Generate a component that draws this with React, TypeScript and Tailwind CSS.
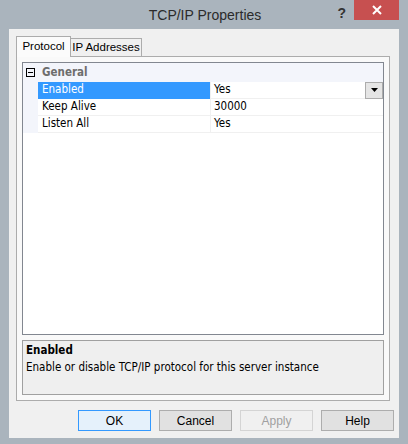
import React from "react";

type Row = { name: string; value: string; selected?: boolean };

const rows: Row[] = [
	{ name: "Enabled", value: "Yes", selected: true },
	{ name: "Keep Alive", value: "30000" },
	{ name: "Listen All", value: "Yes" },
];

const gridFont = { fontFamily: "'DejaVu Sans Condensed', 'DejaVu Sans', sans-serif" };

const DialogButton = ({
	label,
	primary,
	disabled,
}: {
	label: string;
	primary?: boolean;
	disabled?: boolean;
}) => (
	<button
		className={`w-[73px] h-[21px] flex items-center justify-center text-[12px] border ${
			primary
				? "border-[#3399ff] bg-[#e5f1fb] text-black"
				: disabled
				? "border-[#d4d4d4] bg-[#f0f0f0] text-[#a0a0a0]"
				: "border-[#adadad] bg-[#e1e1e1] text-black"
		}`}
	>
		{label}
	</button>
);

const App = () => {
	return (
		<div className="w-[408px] h-[444px] bg-[#aab4bd] flex flex-col font-['Liberation_Sans',sans-serif]">
			{/* ---------- Title bar ---------- */}
			<div className="h-[29px] flex items-center relative">
				<div className="flex-1 text-center text-[14px] text-[#2b2b2b] leading-none pl-[2px] pt-[1px]">
					TCP/IP Properties
				</div>
				<div className="absolute right-[62px] top-[3px] text-[14px] font-bold text-[#333]">?</div>
				<div className="absolute right-[9px] top-0 w-[45px] h-[20px] bg-[#c75050] flex items-center justify-center">
					<svg width="10" height="10" viewBox="0 0 10 10">
						<path d="M1 1 L9 9 M9 1 L1 9" stroke="#fff" strokeWidth="2" />
					</svg>
				</div>
			</div>

			{/* ---------- Client area ---------- */}
			<div className="mx-[9px] h-[409px] bg-[#f0f0f0] flex flex-col px-[7px] pt-[7px]">
				{/* Tabs */}
				<div className="flex items-end h-[20px] text-[11.5px] whitespace-nowrap">
					<div className="h-[21px] w-[55px] border border-b-0 border-[#acacac] bg-[#fbfbfb] flex items-center justify-center relative z-10 -mb-px">
						Protocol
					</div>
					<div className="h-[18px] w-[71px] border border-l-0 border-b-0 border-[#acacac] bg-[#f0f0f0] flex items-center justify-center">
						IP Addresses
					</div>
				</div>

				{/* Tab page */}
				<div className="h-[345px] mr-[2px] border border-[#acacac] bg-[#f9f9f9] px-[5px] pt-[5px] flex flex-col">
					{/* Property grid */}
					<div className="h-[273px] border border-[#828790] bg-white" style={gridFont}>
						<div className="flex h-[19px] bg-[#f3f5fb] items-center">
							<div className="w-[15px] flex justify-center">
								<div className="w-[9px] h-[9px] border border-black flex items-center justify-center">
									<div className="w-[5px] h-px bg-black" />
								</div>
							</div>
							<div className="text-[11.5px] font-bold text-[#6d6d6d] pl-[4px] pt-[1px]">General</div>
						</div>
						{rows.map((r) => (
							<div key={r.name} className="flex h-[17px]">
								<div className="w-[15px] bg-[#f3f5fb]" />
								<div
									className={`w-[172px] pl-[4px] text-[11.5px] flex items-center border-b ${
										r.selected
											? "bg-[#3399ff] text-white border-[#3399ff]"
											: "text-black border-[#f0f0f0]"
									}`}
								>
									{r.name}
								</div>
								<div className="flex-1 flex items-center border-b border-l border-[#f0f0f0] pl-[3px] text-[11.5px] text-black">
									<span className="flex-1">{r.value}</span>
									{r.selected && (
										<div className="w-[18px] h-[17px] bg-[#e5e5e5] border border-[#acacac] flex items-center justify-center">
											<svg width="7" height="4" viewBox="0 0 7 4">
												<path d="M0 0 H7 L3.5 4 Z" fill="#000" />
											</svg>
										</div>
									)}
								</div>
							</div>
						))}
					</div>

					{/* Description */}
					<div className="mt-[5px] h-[55px] border border-[#a0a0a0] bg-[#efefef] px-[3px] pt-[1px]" style={gridFont}>
						<div className="text-[11.5px] font-bold text-black leading-[16px]">Enabled</div>
						<div className="text-[11.5px] text-black leading-[16px] mt-px">
							Enable or disable TCP/IP protocol for this server instance
						</div>
					</div>
				</div>

				{/* Buttons */}
				<div className="flex justify-end gap-[8px] mt-[9px] -mr-[2px]">
					<DialogButton label="OK" primary />
					<DialogButton label="Cancel" />
					<DialogButton label="Apply" disabled />
					<DialogButton label="Help" />
				</div>
			</div>
		</div>
	);
};

export default App;
